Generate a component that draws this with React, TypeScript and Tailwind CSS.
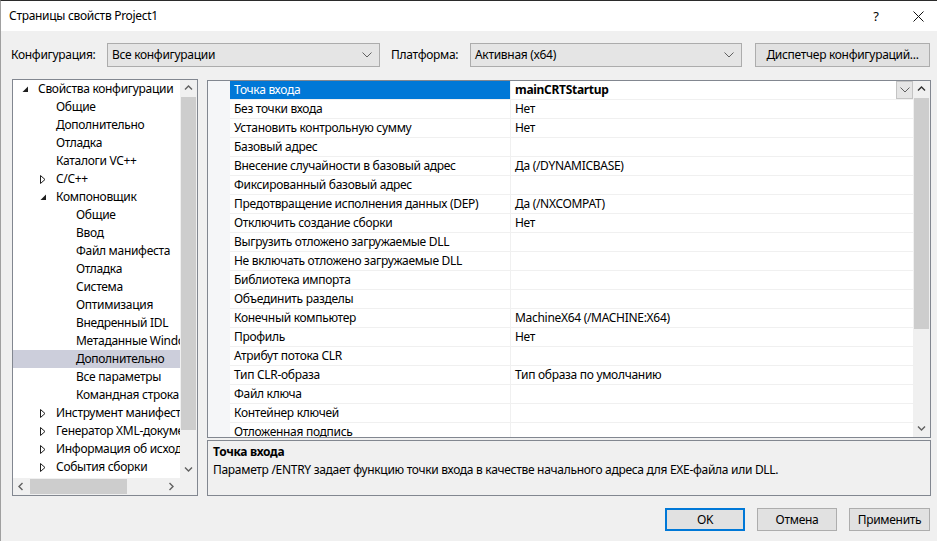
import React from 'react';

const FONT = "font-['Noto_Sans',sans-serif]";

type TreeItem = { t: string; lvl: 0 | 1 | 2; a?: 'open' | 'closed'; sel?: boolean };

const tree: TreeItem[] = [
  { t: 'Свойства конфигурации', lvl: 0, a: 'open' },
  { t: 'Общие', lvl: 1 },
  { t: 'Дополнительно', lvl: 1 },
  { t: 'Отладка', lvl: 1 },
  { t: 'Каталоги VC++', lvl: 1 },
  { t: 'C/C++', lvl: 1, a: 'closed' },
  { t: 'Компоновщик', lvl: 1, a: 'open' },
  { t: 'Общие', lvl: 2 },
  { t: 'Ввод', lvl: 2 },
  { t: 'Файл манифеста', lvl: 2 },
  { t: 'Отладка', lvl: 2 },
  { t: 'Система', lvl: 2 },
  { t: 'Оптимизация', lvl: 2 },
  { t: 'Внедренный IDL', lvl: 2 },
  { t: 'Метаданные Windows', lvl: 2 },
  { t: 'Дополнительно', lvl: 2, sel: true },
  { t: 'Все параметры', lvl: 2 },
  { t: 'Командная строка', lvl: 2 },
  { t: 'Инструмент манифеста', lvl: 1, a: 'closed' },
  { t: 'Генератор XML-документов', lvl: 1, a: 'closed' },
  { t: 'Информация об исходном коде', lvl: 1, a: 'closed' },
  { t: 'События сборки', lvl: 1, a: 'closed' },
];

const rows: [string, string, boolean?][] = [
  ['Точка входа', 'mainCRTStartup', true],
  ['Без точки входа', 'Нет'],
  ['Установить контрольную сумму', 'Нет'],
  ['Базовый адрес', ''],
  ['Внесение случайности в базовый адрес', 'Да (/DYNAMICBASE)'],
  ['Фиксированный базовый адрес', ''],
  ['Предотвращение исполнения данных (DEP)', 'Да (/NXCOMPAT)'],
  ['Отключить создание сборки', 'Нет'],
  ['Выгрузить отложено загружаемые DLL', ''],
  ['Не включать отложено загружаемые DLL', ''],
  ['Библиотека импорта', ''],
  ['Объединить разделы', ''],
  ['Конечный компьютер', 'MachineX64 (/MACHINE:X64)'],
  ['Профиль', 'Нет'],
  ['Атрибут потока CLR', ''],
  ['Тип CLR-образа', 'Тип образа по умолчанию'],
  ['Файл ключа', ''],
  ['Контейнер ключей', ''],
  ['Отложенная подпись', ''],
];

const Chevron = ({ dir, color = '#606060' }: { dir: 'up' | 'down' | 'left' | 'right'; color?: string }) => {
  const d =
    dir === 'up'
      ? 'M1 5.5 L4.5 2 L8 5.5'
      : dir === 'down'
      ? 'M1 2.5 L4.5 6 L8 2.5'
      : dir === 'left'
      ? 'M5.5 1 L2 4.5 L5.5 8'
      : 'M2.5 1 L6 4.5 L2.5 8';
  return (
    <svg width="9" height="9" viewBox="0 0 9 9">
      <path d={d} fill="none" stroke={color} strokeWidth="1.4" />
    </svg>
  );
};

const ComboChevron = () => (
  <svg width="10" height="6" viewBox="0 0 10 6">
    <path d="M0.5 0.5 L5 5 L9.5 0.5" fill="none" stroke="#606060" strokeWidth="1" />
  </svg>
);

const Arrow = ({ a }: { a?: 'open' | 'closed' }) => {
  if (a === 'open')
    return (
      <svg width="7" height="7" viewBox="0 0 7 7">
        <polygon points="6,0.5 6,6 0.5,6" fill="#1e1e1e" />
      </svg>
    );
  if (a === 'closed')
    return (
      <svg width="6" height="9" viewBox="0 0 6 9">
        <polygon points="0.5,0.5 5,4.5 0.5,8.5" fill="none" stroke="#1e1e1e" strokeWidth="1" />
      </svg>
    );
  return null;
};

const Combo = ({ w, text }: { w: string; text: string }) => (
  <div className={`${w} h-[24px] bg-[#e5e5e5] border border-[#acacac] flex items-center justify-between pl-[4px] pr-[7px]`}>
    <span>{text}</span>
    <ComboChevron />
  </div>
);

const Btn = ({ w, text, def }: { w: string; text: string; def?: boolean }) => (
  <div
    className={`${w} h-[23px] bg-[#e1e1e1] flex items-center justify-center ${
      def ? 'border-2 border-[#0078d7]' : 'border border-[#adadad]'
    }`}
  >
    {text}
  </div>
);

export default function App() {
  return (
    <div
      className={`${FONT} w-[937px] h-[541px] bg-[#f0f0f0] text-[12px] leading-[18px] tracking-[-0.3px] text-black border-t border-t-[#2b2b2b] border-l border-l-[#a0a0a0] flex flex-col overflow-hidden`}
    >
      {/* Title bar */}
      <div className="h-[30px] bg-white flex items-center pl-[8px] shrink-0">
        <span className="flex-1 text-[12px]">Страницы свойств Project1</span>
        <span className="w-[20px] text-center text-[13px] mr-[22px]">?</span>
        <div className="w-[20px] flex justify-center mr-[9px]">
          <svg width="11" height="11" viewBox="0 0 11 11">
            <path d="M0.5 0.5 L10.5 10.5 M10.5 0.5 L0.5 10.5" stroke="#111" strokeWidth="1" />
          </svg>
        </div>
      </div>

      {/* Toolbar */}
      <div className="mt-[12px] flex items-center h-[24px] pl-[10px] shrink-0">
        <span className="w-[96px]">Конфигурация:</span>
        <Combo w="w-[273px]" text="Все конфигурации" />
        <span className="ml-[11px] w-[79px]">Платформа:</span>
        <Combo w="w-[272px]" text="Активная (x64)" />
        <div className="ml-[13px] w-[175px] h-[24px] bg-[#e1e1e1] border border-[#adadad] flex items-center justify-center">
          Диспетчер конфигураций...
        </div>
      </div>

      {/* Main */}
      <div className="mt-[12px] ml-[11px] flex h-[417px] shrink-0">
        {/* Tree */}
        <div className="w-[186px] h-[417px] border border-[#828790] bg-white flex flex-col">
          <div className="flex h-[398px]">
            <div className="w-[167px] overflow-hidden">
              {tree.map((it, i) => (
                <div
                  key={i}
                  className={`h-[18px] flex items-center whitespace-nowrap ${it.sel ? 'bg-[#cccedb]' : ''} ${
                    it.lvl === 0 ? 'pl-[6px]' : it.lvl === 1 ? 'pl-[24px]' : 'pl-[44px]'
                  }`}
                >
                  <div className="w-[19px] shrink-0 flex items-center">
                    <div className="w-[12px] flex justify-center items-center">
                      <Arrow a={it.a} />
                    </div>
                  </div>
                  <span>{it.t}</span>
                </div>
              ))}
            </div>
            {/* vertical scrollbar */}
            <div className="w-[17px] bg-[#f0f0f0] flex flex-col">
              <div className="h-[17px] flex items-center justify-center">
                <Chevron dir="up" />
              </div>
              <div className="mx-[1px] h-[333px] bg-[#cdcdcd]" />
              <div className="flex-1" />
              <div className="h-[17px] flex items-center justify-center">
                <Chevron dir="down" />
              </div>
            </div>
          </div>
          {/* horizontal scrollbar */}
          <div className="flex h-[17px]">
            <div className="w-[167px] bg-[#f0f0f0] flex items-center">
              <div className="w-[17px] flex justify-center">
                <Chevron dir="left" />
              </div>
              <div className="w-[97px] h-[15px] bg-[#cdcdcd]" />
              <div className="flex-1" />
              <div className="w-[17px] flex justify-center">
                <Chevron dir="right" />
              </div>
            </div>
            <div className="w-[17px] bg-[#f0f0f0]" />
          </div>
        </div>

        {/* Right column */}
        <div className="ml-[9px] w-[724px] flex flex-col">
          {/* Grid */}
          <div className="mt-[1px] h-[358px] border border-[#828790] bg-white flex overflow-hidden">
            <div className="w-[22px] bg-[#f5f6f8]" />
            <div className="w-[683px] overflow-hidden">
              {rows.map(([n, v, sel], i) => (
                <div key={i} className="h-[19px] flex border-b border-[#f0f0f0] whitespace-nowrap">
                  <div
                    className={`w-[280px] pl-[4px] h-[18px] flex items-center ${
                      sel ? 'bg-[#0078d7] text-white' : ''
                    }`}
                  >
                    {n}
                  </div>
                  <div className="w-[1px] bg-[#f0f0f0]" />
                  <div className={`flex-1 pl-[4px] h-[18px] flex items-center justify-between ${sel ? 'font-bold' : ''}`}>
                    <span>{v}</span>
                    {sel && (
                      <div className="w-[17px] h-[18px] bg-[#e5e5e5] border border-[#c4c4c4] flex items-center justify-center">
                        <ComboChevron />
                      </div>
                    )}
                  </div>
                </div>
              ))}
            </div>
            <div className="w-[17px] bg-[#f0f0f0] flex flex-col">
              <div className="h-[17px] flex items-center justify-center">
                <Chevron dir="up" color="#303030" />
              </div>
              <div className="mx-[1px] h-[231px] bg-[#cdcdcd]" />
              <div className="flex-1" />
              <div className="h-[17px] flex items-center justify-center">
                <Chevron dir="down" />
              </div>
            </div>
          </div>
          {/* Description */}
          <div className="mt-[2px] flex-1 border border-[#828790] bg-[#f0f0f0] pl-[5px] pt-[2px]">
            <div className="font-bold">Точка входа</div>
            <div>Параметр /ENTRY задает функцию точки входа в качестве начального адреса для EXE-файла или DLL.</div>
          </div>
        </div>
      </div>

      {/* Buttons */}
      <div className="mt-[12px] flex justify-end gap-[12px] pr-[7px] shrink-0">
        <Btn w="w-[80px]" text="OK" def />
        <Btn w="w-[80px]" text="Отмена" />
        <Btn w="w-[81px]" text="Применить" />
      </div>
    </div>
  );
}
